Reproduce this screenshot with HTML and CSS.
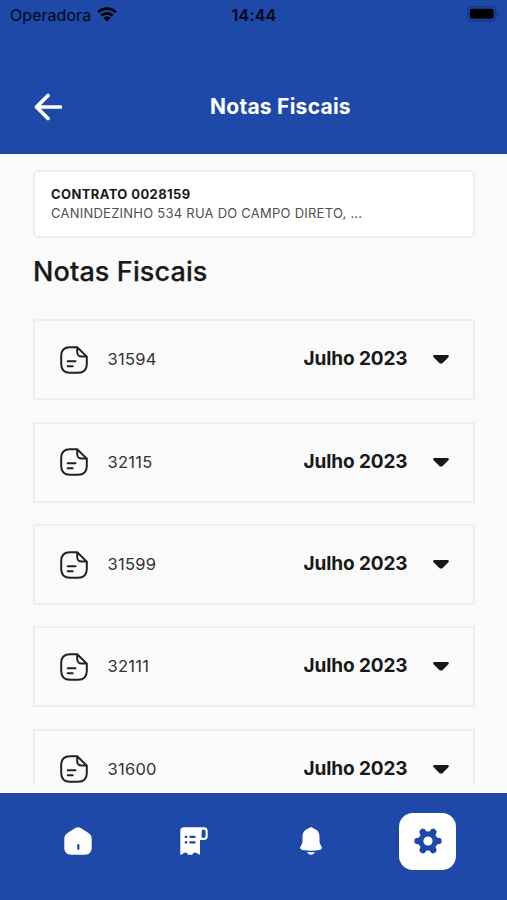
FILE: index.html
```html
<!DOCTYPE html>
<html lang="pt-BR">
<head>
<meta charset="utf-8">
<title>Notas Fiscais</title>
<link rel="stylesheet" href="styles.css">
</head>
<body>
<svg width="0" height="0" class="sprite">
  <symbol id="doc" viewBox="0 0 28 28">
    <path d="M17.200 1.200H10C4 1.200 1.200 4 1.200 10v8c0 6 2.800 8.800 8.800 8.800h8c6 0 8.800-2.800 8.800-8.800v-7.400zM17.200 1.200v4.600c0 3.600 1.200 4.800 4.800 4.800h4.800M7.700 15.300h7.800M7.700 20.300h5"/>
  </symbol>
  <symbol id="caret" viewBox="0 0 16 9">
    <path d="M1.500 0h13c1.400 0 1.900 1.300.9 2.200L9.700 7.900c-1 .9-2.400.9-3.400 0L.6 2.200C-.4 1.300.1 0 1.500 0z"/>
  </symbol>
</svg>
<div class="screen">
  <header class="header">
    <div class="status">
      <div class="carrier"><span class="operator">Operadora</span>
        <svg class="wifi" width="20" height="15" viewBox="0 0 20 15"><path d="M1.200 5.300c5-4.800 12.600-4.800 17.600 0M4.300 8.600c3.300-3.100 8.100-3.100 11.400 0" fill="none" stroke="#000" stroke-width="2.700"/><path d="M6.500 11c2-1.900 5-1.900 7 0L10 14.500z"/></svg>
      </div>
      <span class="clock">14:44</span>
      <svg class="battery" width="32" height="16" viewBox="0 0 32 16"><rect x=".8" y=".8" width="28" height="14" rx="4" fill="none" stroke="#153478" stroke-width="1.100"/><rect x="2.800" y="2.800" width="24" height="10" rx="2.200"/><path d="M30.500 5.500c1.600.8 1.600 4 0 4.800z" fill="#153478"/></svg>
    </div>
    <div class="titlebar">
      <svg class="back" width="29" height="28" viewBox="0 0 29 28"><path d="M15 2.500L3.500 14l11.500 11.500M3.500 14H27.500" fill="none" stroke="#fff" stroke-width="3.700" stroke-linecap="round" stroke-linejoin="round"/></svg>
      <h1>Notas Fiscais</h1>
    </div>
  </header>
  <main class="content">
    <section class="contract"><strong>CONTRATO 0028159</strong><span>CANINDEZINHO 534 RUA DO CAMPO DIRETO, ...</span></section>
    <h2>Notas Fiscais</h2>
    <div class="list">
      <article class="invoice"><svg class="doc"><use href="#doc"/></svg><span class="number">31594</span><b>Julho 2023</b><svg class="caret"><use href="#caret"/></svg></article>
      <article class="invoice"><svg class="doc"><use href="#doc"/></svg><span class="number">32115</span><b>Julho 2023</b><svg class="caret"><use href="#caret"/></svg></article>
      <article class="invoice"><svg class="doc"><use href="#doc"/></svg><span class="number">31599</span><b>Julho 2023</b><svg class="caret"><use href="#caret"/></svg></article>
      <article class="invoice"><svg class="doc"><use href="#doc"/></svg><span class="number">32111</span><b>Julho 2023</b><svg class="caret"><use href="#caret"/></svg></article>
      <article class="invoice"><svg class="doc"><use href="#doc"/></svg><span class="number">31600</span><b>Julho 2023</b><svg class="caret"><use href="#caret"/></svg></article>
    </div>
  </main>
  <nav class="nav">
    <div class="tab"><svg width="28" height="28" viewBox="0 0 28 28"><path d="M11.300.9c1.700-.9 3.700-.9 5.400 0l7.800 5.200c2.100 1.400 3.200 3.300 3.200 5.800v8.600c0 4.600-2.600 7.200-7.200 7.200h-13C2.900 27.700.3 25.100.3 20.500v-8.600c0-2.500 1.100-4.400 3.200-5.800z" fill="#fff"/><path d="M14.300 18.200v3.600" stroke="#1e49a8" stroke-width="2.200" stroke-linecap="round"/></svg></div>
    <div class="tab receipt"><svg width="28" height="28" viewBox="0 0 28 28"><path d="M4 .3h20c2.500 0 3.700 1.600 3.700 4v5c0 2.500-1.300 3.700-3.700 3.700h-4v14.700l-3-1.200-3.300 1.200h-6L5 26.500.3 27.700V4C.3 1.600 1.600.3 4 .3z" fill="#fff"/><path d="M21.600 10.800V4.800c0-3 4-3 4 0v3.900c0 1.400-.7 2.100-2.100 2.100z" fill="#1e49a8"/><path d="M4.800 9.800h2.400M9.500 9.800h6M4.800 15.300h2.400M9.500 15.300h6" stroke="#1e49a8" stroke-width="2.200"/><path d="M2.500 28c1-3.200 4.500-3.200 5.500 0M12.300 28c1-3.200 4.500-3.200 5.500 0" fill="#1e49a8"/></svg></div>
    <div class="tab"><svg width="22" height="28" viewBox="0 0 22 28"><path d="M11 .2c1.300 0 2 .6 2.500 1.300 4 1.200 6 4.300 6 8.300v4.500c0 1.500.4 2.500 1.200 3.800l.7 1.300c1.100 2 0 3.300-2 3.600-5.500 1-11.300 1-16.800 0-2-.3-3.100-1.600-2-3.600l.7-1.300c.8-1.300 1.200-2.300 1.200-3.800V9.800c0-4 2-7.100 6-8.300C9 .8 9.700.2 11 .2z" fill="#fff"/><path d="M7.300 24.900c2.500.3 4.900.3 7.400 0-.8 3.700-6.600 3.700-7.400 0z" fill="#fff"/></svg></div>
    <div class="tab active"><svg width="28" height="28" viewBox="-14 -14 28 28"><circle r="9.700" fill="#1e49a8"/><path d="M-10.400 0h20.800M-5.200-9L5.200 9M5.200-9L-5.200 9" fill="none" stroke="#1e49a8" stroke-width="6.600" stroke-linecap="round"/><circle r="4.600" fill="#fff"/></svg></div>
  </nav>
</div>
</body>
</html>
```
FILE: styles.css
```css
* { box-sizing: border-box; }
body { margin: 0; font-family: Inter, "Liberation Sans", sans-serif; color: #191919; }
.sprite { position: absolute; }
svg { display: block; flex: none; }
.screen { width: 507px; height: 900px; display: flex; flex-direction: column; background: #fafafa; overflow: hidden; }
.header { height: 154.300px; flex: none; background: #1e49a8; }
.status { height: 30px; display: grid; grid-template-columns: 1fr auto 1fr; align-items: center; padding: 0 8px 0 10px; color: #020713; }
.carrier { display: flex; align-items: center; gap: 6px; }
.operator { font-size: 16px; line-height: 30px; letter-spacing: .05px; }
.clock { font-size: 16px; font-weight: 600; letter-spacing: .2px; margin-right: 1px; }
.battery { justify-self: end; margin-bottom: 3px; }
.wifi { margin-bottom: 1px; }
.titlebar { height: 124px; margin-top: -1px; padding: 64px 0 0 33px; display: flex; align-items: flex-start; }
h1 { margin: 0 0 0 148px; font-size: 21px; font-weight: 700; line-height: 28px; letter-spacing: .25px; color: #fff; white-space: nowrap; }
.content { height: 629.700px; flex: none; padding: 16.200px 32.500px 0 33px; overflow: hidden; }
.contract { height: 68px; border: 2px solid #ededed; border-radius: 6px; background: #fff; padding: 13px 16px; display: flex; flex-direction: column; line-height: 19px; font-size: 13px; white-space: nowrap; }
.contract strong { font-size: 13px; font-weight: 700; letter-spacing: .4px; }
.contract span { color: #505050; letter-spacing: .24px; }
h2 { margin: 15.500px 0 0; font-size: 27px; line-height: 36px; font-weight: 500; letter-spacing: .12px; -webkit-text-stroke: .25px #191919; }
.list { margin-top: 29.300px; display: flex; flex-direction: column; gap: 21.400px; }
.invoice { height: 81px; flex: none; border: 2px solid #eee; display: flex; align-items: center; padding: 0 23px 0 24.500px; }
.doc { width: 28px; height: 28px; fill: none; stroke: #222; stroke-width: 2; stroke-linecap: round; stroke-linejoin: round; }
.number { margin-left: 20px; font-size: 16.500px; letter-spacing: .25px; color: #333; margin-bottom: 1px; }
.invoice b { margin-left: auto; font-size: 19px; font-weight: 700; letter-spacing: -.1px; margin-bottom: 2px; }
.caret { width: 18px; height: 9px; margin-left: 24px; fill: #171717; }
.nav { margin-top: auto; height: 107.500px; background: #1e49a8; display: grid; grid-template-columns: repeat(4, 116.500px); padding: 20px 0 0 20px; }
.tab { height: 57px; display: flex; align-items: center; justify-content: center; }
.receipt { padding-right: 1.500px; }
.active { width: 57px; border-radius: 14px; background: #fff; justify-self: center; }
```
